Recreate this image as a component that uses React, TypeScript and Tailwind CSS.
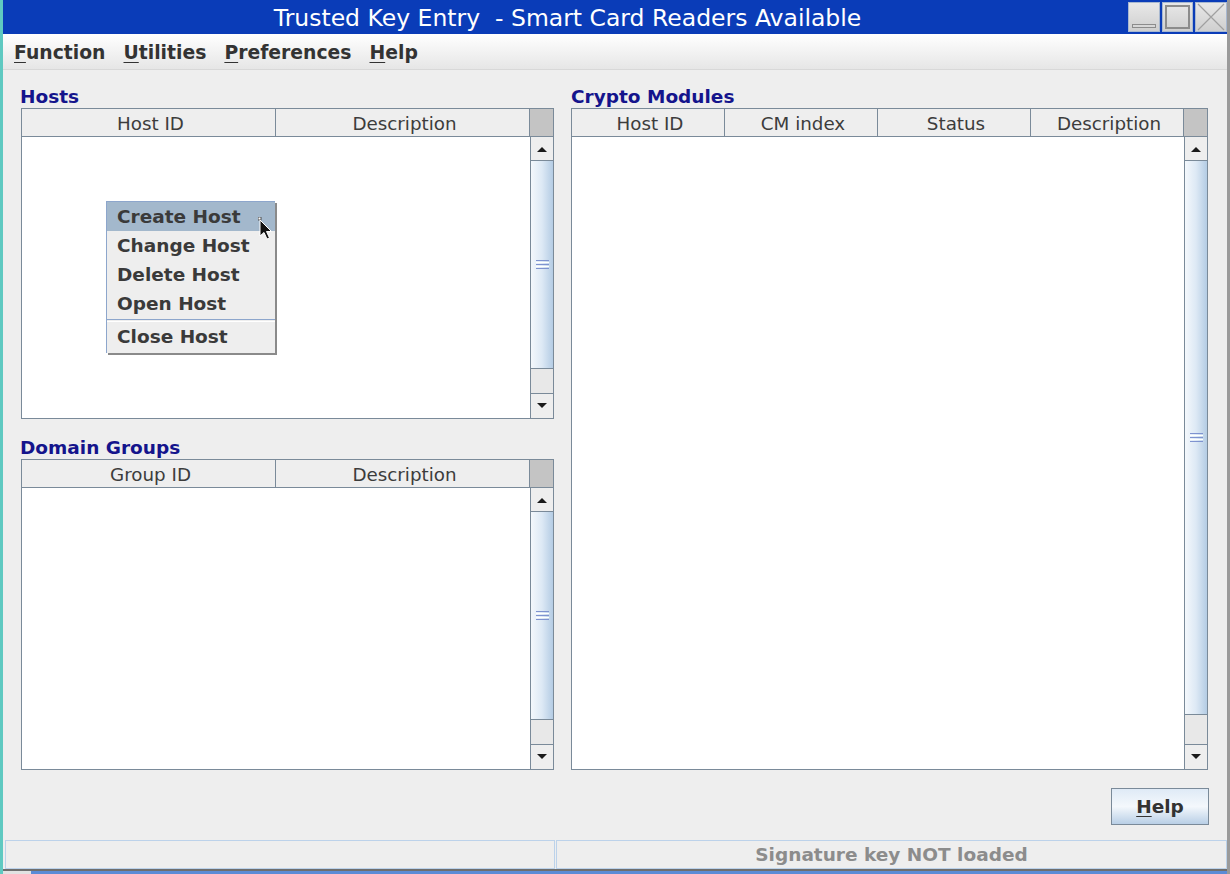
import React from "react";

type Col = { label: string };

function Mnemonic({ text }: { text: string }) {
  return (
    <span>
      <span className="underline underline-offset-[3px] decoration-1">{text[0]}</span>
      {text.slice(1)}
    </span>
  );
}

function ScrollBar({ track }: { track: number }) {
  return (
    <div className="flex w-[23px] shrink-0 flex-col border-l border-[#7a8a99] bg-[#eeeeee]">
      <div className="flex h-[24px] shrink-0 items-center justify-center border-b border-[#7a8a99] bg-[#eeeeee]">
        <svg width="10" height="6" viewBox="0 0 10 6">
          <path d="M0 6 H10 L5 1 Z" fill="#1a1a1a" />
        </svg>
      </div>
      <div className="flex flex-1 items-center justify-center border-b border-[#7a8a99] bg-gradient-to-r from-[#f4f8fc] via-[#dde9f5] to-[#b4cce4]">
        <div className="flex flex-col gap-[1px]">
          <div className="h-[1px] w-[13px] bg-[#7f93d0]" />
          <div className="h-[1px] w-[13px] bg-[#ffffff]" />
          <div className="h-[1px] w-[13px] bg-[#7f93d0]" />
          <div className="h-[1px] w-[13px] bg-[#ffffff]" />
          <div className="h-[1px] w-[13px] bg-[#7f93d0]" />
        </div>
      </div>
      <div className="shrink-0 border-b border-[#7a8a99] bg-[#e8e8e8]" style={{ height: track }} />
      <div className="flex h-[24px] shrink-0 items-center justify-center bg-[#eeeeee]">
        <svg width="10" height="6" viewBox="0 0 10 6">
          <path d="M0 0 H10 L5 5 Z" fill="#1a1a1a" />
        </svg>
      </div>
    </div>
  );
}

function Table({
  columns,
  className,
  track,
  children,
}: {
  columns: Col[];
  className: string;
  track: number;
  children?: React.ReactNode;
}) {
  return (
    <div className={`relative flex flex-col border border-[#7a8a99] bg-white ${className}`}>
      <div className="flex h-[28px] shrink-0 border-b border-[#7a8a99] bg-[#eeeeee]">
        {columns.map((c) => (
          <div
            key={c.label}
            className="flex flex-1 items-center justify-center border-r border-[#7a8a99] pt-[2px] pl-[4px] text-[18.3px] text-[#3c3c3c]"
          >
            {c.label}
          </div>
        ))}
        <div className="w-[23px] shrink-0 bg-[#c4c4c4]" />
      </div>
      <div className="flex flex-1">
        <div className="flex-1 bg-white" />
        <ScrollBar track={track} />
      </div>
      {children}
    </div>
  );
}

function PopupMenu() {
  const items = ["Create Host", "Change Host", "Delete Host", "Open Host"];
  return (
    <div className="absolute left-[84px] top-[92px] w-[169px] border-l border-t border-[#8da6cc] bg-[#eeeeee] shadow-[2px_2px_0_#8a8a8a]">
      <div className="flex flex-col">
        {items.map((it, i) => (
          <div
            key={it}
            className={`flex h-[29px] items-center pl-[10px] text-[18.5px] font-bold text-[#3a3a3a] ${
              i === 0 ? "bg-[#a3b8cc]" : ""
            }`}
          >
            {it}
          </div>
        ))}
        <div className="my-[1px] h-[1px] bg-[#8da6cc]" />
        <div className="h-[1px] bg-white" />
        <div className="flex h-[29px] items-center pl-[10px] text-[18.5px] font-bold text-[#3a3a3a]">Close Host</div>
        <div className="h-[2px]" />
      </div>
      <svg className="absolute left-[151px] top-[15px]" width="16" height="24" viewBox="0 0 16 24">
        <rect x="0" y="0" width="3" height="3" fill="white" stroke="#333" strokeWidth="0.8" />
        <path d="M2 3 L2 19 L6 15.5 L9 22 L11.5 21 L8.5 14.5 L13.5 14.5 Z" fill="#111" stroke="white" strokeWidth="1" />
      </svg>
    </div>
  );
}

export default function App() {
  return (
    <div className="flex h-[874px] w-[1230px] flex-col overflow-hidden border-l-[3px] border-r-[3px] border-l-[#5fc9c1] border-r-[#9a9a9a] bg-[#eeeeee] font-['DejaVu_Sans',sans-serif]">
      {/* title bar */}
      <div className="flex h-[34px] shrink-0 items-stretch bg-[#0a3cb8]">
        <div className="flex flex-1 items-center justify-center pl-[4px] pt-[3px] text-[23.5px] text-white whitespace-pre">
          Trusted Key Entry  - Smart Card Readers Available
        </div>
        <div className="flex gap-[2px] py-[2px]">
          <div className="relative w-[32px] border border-[#a8b8d0] bg-gradient-to-b from-[#e8e8e8] to-[#cfcfcf]">
            <div className="absolute bottom-[3px] left-[3px] h-[4px] w-[24px] border border-[#8c8c8c] bg-[#d8d8d8]" />
          </div>
          <div className="relative w-[31px] border border-[#a8b8d0] bg-gradient-to-b from-[#e8e8e8] to-[#cfcfcf]">
            <div className="absolute inset-[2px] border-2 border-[#8c8c8c]" />
          </div>
          <div className="relative w-[32px] border border-[#a8b8d0] bg-gradient-to-b from-[#e8e8e8] to-[#cfcfcf]">
            <svg className="absolute inset-0" width="30" height="28" viewBox="0 0 30 28">
              <path d="M2 1 L28 27 M28 1 L2 27" stroke="#a0a0a0" strokeWidth="1.2" />
            </svg>
          </div>
        </div>
      </div>

      {/* menu bar */}
      <div className="flex h-[36px] shrink-0 items-center gap-[18px] border-b border-[#d8d8d8] bg-gradient-to-b from-white to-[#e6e6e6] pl-[11px] pt-[3px] text-[18.8px] font-bold text-[#333333]">
        <Mnemonic text="Function" />
        <Mnemonic text="Utilities" />
        <Mnemonic text="Preferences" />
        <Mnemonic text="Help" />
      </div>

      {/* body */}
      <div className="flex flex-1 gap-[17px] pl-[18px] pt-[16px]">
        <div className="flex w-[533px] flex-col">
          <div className="-ml-[1px] h-[22px] text-[18.5px] font-bold leading-[22px] text-[#14148c]">Hosts</div>
          <Table columns={[{ label: "Host ID" }, { label: "Description" }]} className="h-[311px]" track={25}>
            <PopupMenu />
          </Table>
          <div className="-ml-[1px] mt-[18px] h-[22px] text-[18.5px] font-bold leading-[22px] text-[#14148c]">Domain Groups</div>
          <Table columns={[{ label: "Group ID" }, { label: "Description" }]} className="h-[311px]" track={25} />
        </div>
        <div className="flex w-[637px] flex-col">
          <div className="h-[22px] text-[18.5px] font-bold leading-[22px] text-[#14148c]">Crypto Modules</div>
          <Table
            columns={[{ label: "Host ID" }, { label: "CM index" }, { label: "Status" }, { label: "Description" }]}
            className="h-[662px]"
            track={30}
          />
        </div>
      </div>

      {/* button row */}
      <div className="flex h-[70px] shrink-0 items-start justify-end pr-[18px] pt-[18px]">
        <div className="flex h-[37px] w-[98px] items-center justify-center border border-[#7a8a99] bg-gradient-to-b from-[#dfeaf6] via-[#f4f8fc] to-[#b9cfe6] text-[18.5px] font-bold text-[#333333]">
          <Mnemonic text="Help" />
        </div>
      </div>

      {/* status bar */}
      <div className="flex h-[29px] shrink-0 gap-[1px] pl-[2px]">
        <div className="w-[550px] border border-[#bcd2ea]" />
        <div className="flex flex-1 items-center justify-center border border-[#bcd2ea] text-[18.5px] font-bold text-[#8c8c8c]">
          Signature key NOT loaded
        </div>
      </div>
      <div className="h-[2px] shrink-0 bg-[#6e6e6e]" />
      <div className="flex flex-1">
        <div className="w-[28px] bg-[#e2e2e2]" />
        <div className="flex-1 bg-[#5b8bd6]" />
      </div>
    </div>
  );
}
